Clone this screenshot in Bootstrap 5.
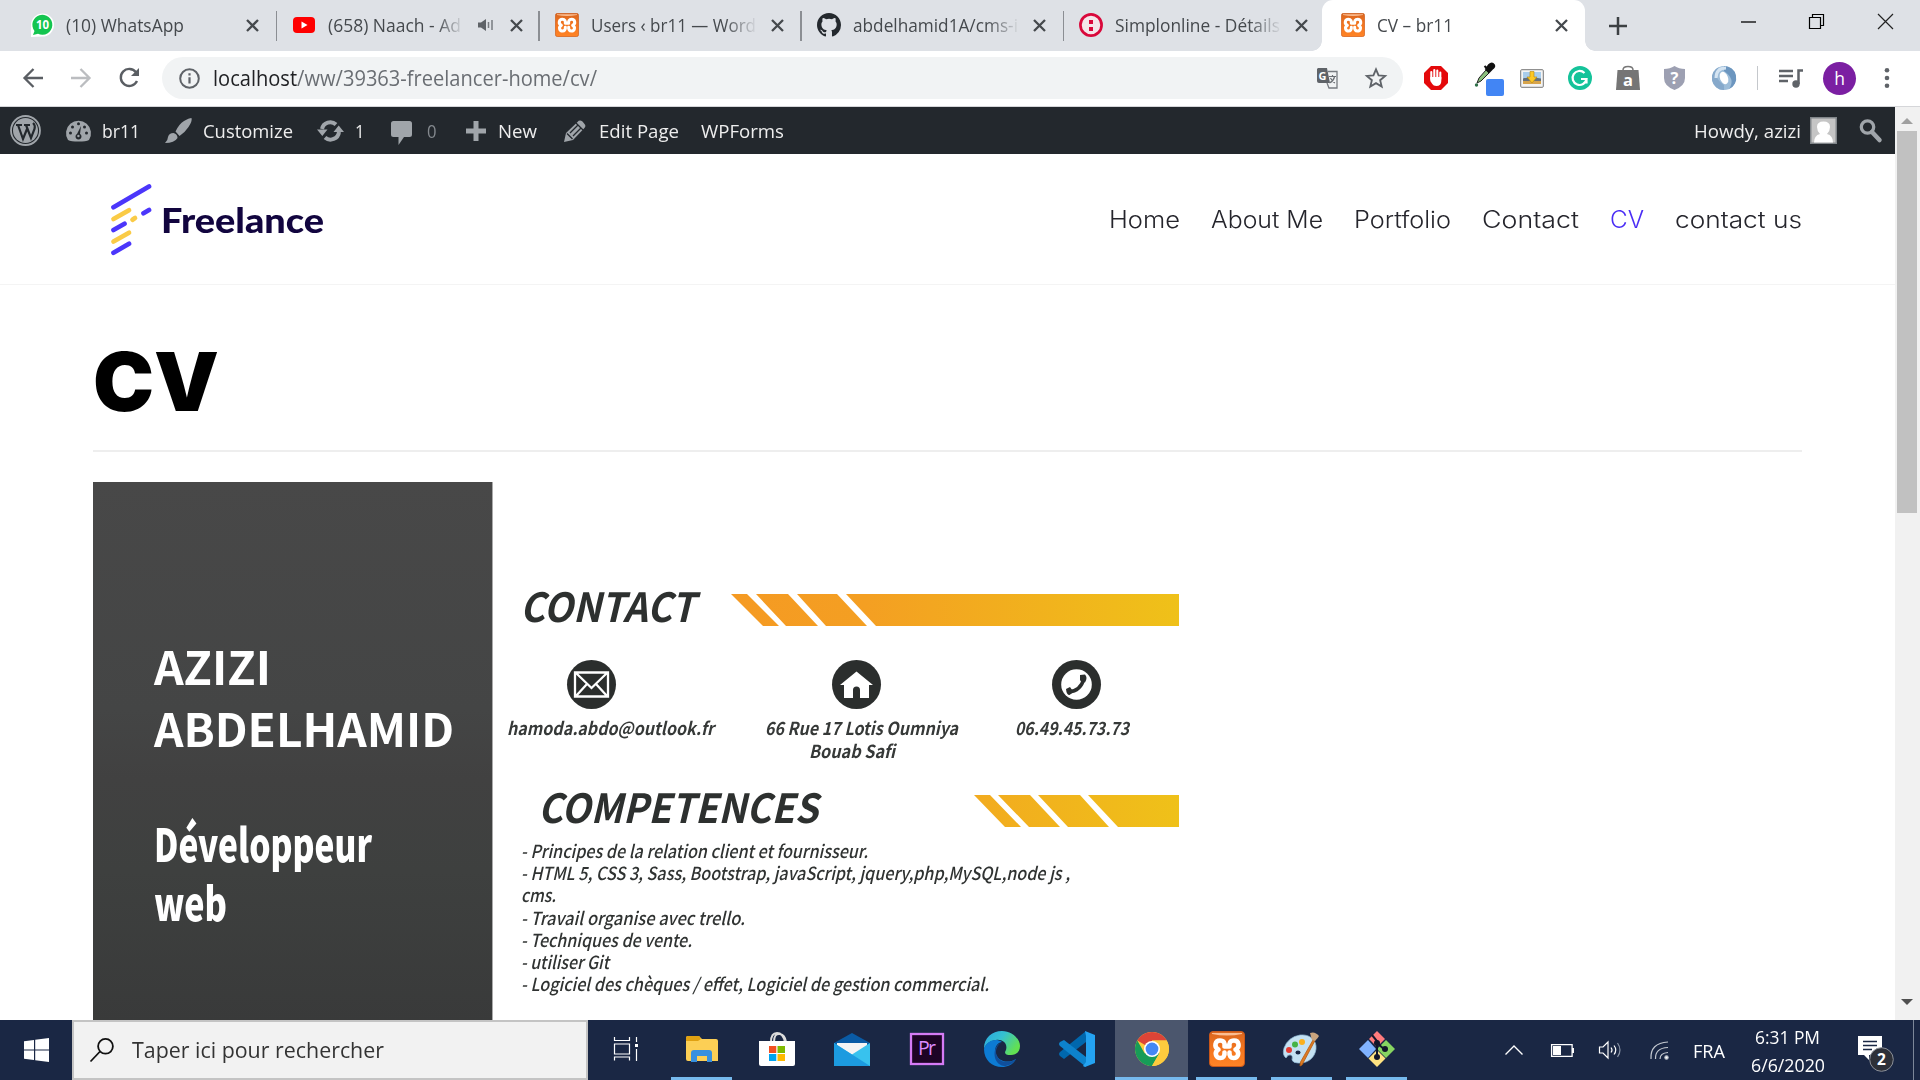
<!DOCTYPE html>
<html lang="fr">
<head>
<meta charset="utf-8">
<title>CV – br11</title>
<link href="https://cdn.jsdelivr.net/npm/bootstrap@5.3.0/dist/css/bootstrap.min.css" rel="stylesheet">
<style>
html,body{height:1080px;overflow:hidden}
body{font-family:"Open Sans","Noto Sans",sans-serif;width:1920px;background:#fff;line-height:1.2}
svg{display:block;flex:none;overflow:visible}
.fit{display:inline-block;white-space:nowrap;transform-origin:0 50%;flex:none}
.g{display:grid;align-items:center;flex:none}
/* browser tabs */
.tabstrip{height:51px;background:#dee1e6;padding-left:14px;flex:none}
.btab{width:262.3px;height:51px;grid-template-columns:24px 12px 1fr 28px 15px;padding-left:16px;padding-bottom:1px;position:relative;font-size:17.5px;color:#45494d}
.btab.muted-tab{grid-template-columns:24px 12px 1fr 40px 0}
.btab .x{margin-left:13px}
.btab.muted-tab .x{margin-left:11px}
.btab .speaker{margin-left:14px}
.btab .clip{width:136px}
.btab.line::after{content:"";position:absolute;right:-1px;top:11px;height:30px;width:1.5px;background:#8b8e93}
.fade-end{overflow:hidden;-webkit-mask-image:linear-gradient(90deg,#000 80%,transparent);mask-image:linear-gradient(90deg,#000 80%,transparent)}
.btab.active{background:#fff;border-radius:11px 11px 0 0;margin-left:-3px;width:263px;padding-left:19px}
.btab.active::before,.btab.active .foot{content:"";position:absolute;bottom:0;width:10px;height:10px}
.btab.active::before{left:-10px;background:radial-gradient(circle at 0 0,transparent 9.5px,#fff 10px)}
.btab.active .foot{right:-10px;background:radial-gradient(circle at 100% 0,transparent 9.5px,#fff 10px)}
.wincontrols{grid-template-columns:132px 68px 69px 27px;margin-left:24px;height:51px}
.wincontrols .up{margin-top:-8px}
/* toolbar */
.tools{height:55.5px;border-bottom:1.5px solid #d5d6d9;grid-template-columns:48px 48px 43px 1241px 21px 48px 48px 48px 48px 48px 48px 45px 22px 44px 51px 20px;padding-left:23px;flex:none}
.omni{height:42px;border-radius:21px;background:#f1f3f4;grid-template-columns:34px 1fr 48px 38px;padding-left:17px;font-size:21px;color:#6a6e73}
.omni b{font-weight:400;color:#202124}
/* admin bar */
.adminbar{height:47.5px;background:#23282d;color:#eee;font-size:18.5px;width:1895px;grid-template-columns:56px 36px 63px 38px 114px 38px 36px 36px 39px 32px 66px 35px 102px 1fr 116px 50px 35px;padding-left:10px;padding-top:1px}
.adminbar svg{fill:#a0a5aa}
/* site */
.sitehead{height:131px;border-bottom:1.5px solid #f4f4f4;padding:1px 93px 0 111px}
.brandname{font-family:Lato,sans-serif;font-weight:900;font-size:34.5px;color:#12053f;margin-left:9px;padding-top:1px}
.menu{font-family:Inter,sans-serif;font-weight:300;font-size:23.5px;color:#25252c;gap:31px;padding-top:1px}
.menu .on{color:#4a2df5}
.bigtitle{font-family:Inter,sans-serif;font-weight:900;font-size:81px;color:#000;line-height:80px;height:80px;margin:57px 0 0}
.sep{height:2px;background:#eee;margin-top:28px;width:1709px}
.cvart{margin-top:30px;font-family:"Noto Sans CJK JP",sans-serif;color:#2d302f}
.side{width:400px;height:540px;background:linear-gradient(#484848 0,#444545 42%,#414141 55%,#3e403f 72%,#393a3a);border-right:1px solid #aaa;padding:152px 0 0 61px;color:#fff;font-weight:700}
.who{font-size:46.5px;line-height:62px}
.job{font-size:46px;line-height:59px;margin-top:55px;font-weight:900}
.resume{padding:99px 0 0 14px;font-style:italic}
.sec{font-weight:700;font-size:40px;line-height:48px;height:48px}
.ways{font-weight:600;font-size:18px;line-height:23px;margin-top:31px;height:102px;color:#363938}
.ways svg{margin-bottom:7px}
.skills{font-size:18px;line-height:22.2px;color:#303332;font-weight:500;margin-top:9px;padding-left:14px}
/* scrollbar */
.sbar{width:25px;background:#f1f1f1;height:913px;padding:11px 0 8px 3px}
.thumb{background:#c1c1c1;width:20px;height:382px;margin:7px 0 486px -1px}
/* taskbar */
.task{height:60px;background:#1a2744;color:#fff;flex:none}
.find{width:516px;height:60px;background:#f2f2f2;border:2px solid #c4c4c4;font-size:21px;color:#333;padding:1px 0 0 16px}
.find .hint{margin-left:18px}
.apps{padding-left:1px}
.app{width:75px;height:60px;display:flex;justify-content:center;align-items:center;padding-bottom:2px;position:relative}
.app.run::after{content:"";position:absolute;bottom:0;left:7px;right:7px;height:3px;background:#76b9ed}
.app.cur{background:linear-gradient(#4b566d,#4b566d) 1px 0/73px 60px no-repeat}
.app.cur::after{left:1px;right:1px}
.tray{grid-template-columns:46px 48px 51px 43px 53px 86px 75px 8px;font-size:18px;margin-left:91px;height:60px}
.clock{line-height:28px;padding-top:1px}
.notes{margin:8px 0 0 26px}
.edge-line{width:1px;height:60px;background:#7c8799;margin-left:6px}
</style>
<script src="https://cdn.jsdelivr.net/npm/bootstrap@5.3.0/dist/js/bootstrap.bundle.min.js"></script>
</head>
<body class="d-flex flex-column">
<svg width="0" height="0" class="position-absolute">
<defs>
<linearGradient id="or" x1="0" y1="0" x2="0" y2="1"><stop offset="0" stop-color="#d9661f"/><stop offset=".5" stop-color="#f4761f"/><stop offset="1" stop-color="#ff8426"/></linearGradient>
<linearGradient id="bar" gradientUnits="userSpaceOnUse" x1="731" y1="0" x2="1179" y2="0"><stop offset="0" stop-color="#f59a23"/><stop offset=".3" stop-color="#f49f22"/><stop offset="1" stop-color="#efc119"/></linearGradient>
<linearGradient id="edge1" x1="0" y1="0" x2="1" y2=".5"><stop offset="0" stop-color="#2ba7e0"/><stop offset=".5" stop-color="#35c1d1"/><stop offset="1" stop-color="#62e052"/></linearGradient>
<symbol id="xampp" viewBox="0 0 36 36"><rect x=".5" y=".5" width="35" height="35" rx="3.5" fill="url(#or)" stroke="#c8571a"/><path d="M3 3Q18 6 33 3V2H3z" fill="#fbbd92"/><path d="M15.500 21.500C16 25 14 27 11.500 27C6.500 27 5 21 9.500 18.500C4.500 16 6 9.500 11 9.500C15 9.500 16 12 15.500 15.500H20.500C20 12 21 9.500 25 9.500C30 9.500 31.500 16 26.500 18.500C31 21 29.500 27 24.500 27C22 27 20 25 20.500 21.500" fill="none" stroke="#fff" stroke-width="4.600" stroke-linecap="round" stroke-linejoin="round"/></symbol>
<symbol id="x" viewBox="0 0 13 13"><path d="M1 1l11 11M12 1L1 12" stroke="#45494d" stroke-width="2.300"/></symbol>
</defs>
</svg>

<header class="tabstrip d-flex">
 <div class="btab line g"><svg width="24" height="24" viewBox="0 0 24 24"><path d="M1 24V12A11.500 11.500 0 1 1 12.500 23.500z" fill="#fff"/><path d="M3 22L4.500 18A10 10 0 1 1 8 20.800z" fill="#14c550"/><text x="12.500" y="16.300" font-size="11.500" font-weight="700" fill="#fff" text-anchor="middle">10</text></svg><i></i><span><span class="fit" data-w="118">(10) WhatsApp</span></span><svg class="x" width="13" height="13"><use href="#x"/></svg></div>
 <div class="btab line muted-tab g"><svg width="24" height="24" viewBox="0 0 24 24"><rect x="1" y="4" width="22" height="16" rx="4" fill="#f00"/><path d="M9.500 8.500v7l6-3.500z" fill="#fff"/></svg><i></i><div class="d-flex align-items-center"><span class="fade-end d-block clip"><span class="fit" data-w="133">(658) Naach - Ad</span></span><svg class="speaker" width="17" height="14" viewBox="0 0 17 14"><path d="M0 4.500h3L8 1v12L3 9.500H0z" fill="#5f6368"/><path d="M10.500 4v6M14 2v10" stroke="#777b80" stroke-width="1.500"/></svg></div><svg class="x" width="13" height="13"><use href="#x"/></svg></div>
 <div class="btab line g"><svg width="24" height="24"><use href="#xampp"/></svg><i></i><span class="fade-end"><span class="fit" data-w="165">Users ‹ br11 — Word</span></span><svg class="x" width="13" height="13"><use href="#x"/></svg></div>
 <div class="btab line g"><svg width="24" height="24" viewBox="0 0 16 16"><path fill="#24292e" d="M8 0C3.580 0 0 3.580 0 8c0 3.540 2.290 6.530 5.470 7.590.4.070.55-.17.55-.38 0-.19-.01-.82-.01-1.490-2.010.37-2.530-.49-2.690-.94-.09-.23-.48-.94-.82-1.130-.28-.15-.68-.52-.01-.53.63-.01 1.080.58 1.230.82.72 1.210 1.870.87 2.330.66.07-.52.28-.87.51-1.070-1.780-.2-3.640-.89-3.640-3.950 0-.87.31-1.590.82-2.150-.08-.2-.36-1.020.08-2.120 0 0 .67-.21 2.200.82a7.600 7.600 0 0 1 4 0c1.530-1.040 2.200-.82 2.200-.82.44 1.100.16 1.920.08 2.120.51.56.82 1.270.82 2.150 0 3.070-1.870 3.750-3.650 3.950.29.25.54.73.54 1.480 0 1.070-.01 1.930-.01 2.200 0 .21.15.46.55.38A8.010 8.010 0 0 0 16 8c0-4.420-3.580-8-8-8z"/></svg><i></i><span class="fade-end"><span class="fit" data-w="165">abdelhamid1A/cms-i</span></span><svg class="x" width="13" height="13"><use href="#x"/></svg></div>
 <div class="btab g"><svg width="24" height="24" viewBox="0 0 24 24"><circle cx="12" cy="12" r="10.600" fill="#f4e6ea" stroke="#d9083b" stroke-width="2.700"/><path d="M10 7h4v4h-4zM10 14h4v4h-4z" fill="#d9083b"/></svg><i></i><span class="fade-end"><span class="fit" data-w="165">Simplonline - Détails</span></span><svg class="x" width="13" height="13"><use href="#x"/></svg></div>
 <div class="btab active g"><svg width="24" height="24"><use href="#xampp"/></svg><i></i><span><span class="fit" data-w="76">CV – br11</span></span><svg class="x" width="13" height="13"><use href="#x"/></svg><i class="foot"></i></div>
 <div class="wincontrols g"><svg width="18" height="18" viewBox="0 0 18 18"><path d="M9 0v18M0 9h18" stroke="#3c4043" stroke-width="2.500"/></svg><svg class="up" width="15" height="2" viewBox="0 0 15 2"><path d="M0 1h15" stroke="#000" stroke-width="1.300"/></svg><svg class="up" width="15" height="15" viewBox="0 0 15 15"><path d="M.5 3.500h11v11H.5zM3.500 3V.5h11v11H12" fill="none" stroke="#000" stroke-width="1.200"/></svg><svg class="up" width="15" height="15" viewBox="0 0 15 15"><path d="M0 0l15 15M15 0L0 15" stroke="#222" stroke-width="1.200"/></svg></div>
</header>

<div class="tools g">
 <svg width="20" height="20" viewBox="0 0 20 20" fill="none" stroke="#5a5e63" stroke-width="2.300"><path d="M20 10H2M10.500 1L1.500 10l9 9"/></svg>
 <svg width="20" height="20" viewBox="0 0 20 20" fill="none" stroke="#bbbdc0" stroke-width="2.300"><path d="M0 10h18M9.500 1l9 9-9 9"/></svg>
 <svg width="21" height="20" viewBox="0 0 21 20"><path d="M17 4.200A8.500 8.500 0 1 0 18 13" fill="none" stroke="#5a5e63" stroke-width="2.400"/><path d="M20 0v8h-8z" fill="#5a5e63"/></svg>
 <div class="omni g"><svg width="21" height="21" viewBox="0 0 21 21"><circle cx="10.500" cy="10.500" r="9.300" fill="none" stroke="#5f6368" stroke-width="2"/><path d="M10.500 9.300v6.200M10.500 5.300v2.300" stroke="#5f6368" stroke-width="2.200"/></svg><span><span class="fit" data-w="384"><b>localhost</b>/ww/39363-freelancer-home/cv/</span></span>
 <svg width="21" height="22" viewBox="0 0 21 22"><path d="M1 1h9l3 15H2Q0 16 0 14V2z" fill="#5f6368"/><path d="M11 4.500h9V21h-8l-2-5" fill="none" stroke="#777b80" stroke-width="1.300"/><text x="1.500" y="12.500" font-size="11" font-weight="700" fill="#fff">G</text><path d="M12 9.500h7M15.500 8v2M17.500 10q-1 4-5 6M13.500 11q2 4 4.500 5" fill="none" stroke="#6b6f74" stroke-width="1.200"/></svg>
 <svg width="22" height="22" viewBox="0 0 24 24"><path d="M12 2.500l2.800 6.600 7.200.6-5.500 4.700 1.700 7L12 17.600l-6.200 3.800 1.700-7L2 9.700l7.200-.6z" fill="none" stroke="#5f6368" stroke-width="2"/></svg></div>
 <i></i>
 <svg width="24" height="24" viewBox="0 0 24 24"><path d="M7 0h10l7 7v10l-7 7H7l-7-7V7z" fill="#e4090b"/><path d="M7.300 13V6M10.300 12V4M13.300 12V4.500M16.300 13V6.500" stroke="#fff" stroke-width="2.100" stroke-linecap="round"/><path d="M6.300 11h11v4q0 5-5 5-3 0-4-2L6.300 15z" fill="#fff"/></svg>
 <svg width="32" height="34" viewBox="0 0 32 34"><path d="M5 22l2-5 7-8 3 3-8 8z" fill="#8bbf7d" stroke="#222"/><path d="M12.500 5l6 6M14 8l3-4q3-3 5 0 1 2-2 4l-3 3z" stroke="#111" stroke-width="2" fill="#111"/><circle cx="4.500" cy="24" r="1.700" fill="#30704a"/><rect x="14" y="18" width="18" height="17" rx="2" fill="#4285f4"/></svg>
 <svg width="24" height="19" viewBox="0 0 24 19"><rect x=".7" y=".7" width="22.600" height="17.600" rx="1" fill="#f4f4f4" stroke="#777"/><path d="M3 3h18v7H3z" fill="#a9cdec"/><path d="M3 9.500q7-2 18 0V15H3z" fill="#66707a"/><path d="M3 12h18v3H3z" fill="#d7a44b"/><path d="M10 2.500h4V8h3l-5 6-5-6h3z" fill="#fdc824" stroke="#b98709" stroke-width=".6"/></svg>
 <svg width="24" height="24" viewBox="0 0 24 24"><circle cx="12" cy="12" r="12" fill="#15c39a"/><path d="M16.500 7A7 7 0 1 0 18.500 13h-5.500M18.500 13v4.500" fill="none" stroke="#fff" stroke-width="2.200"/></svg>
 <svg width="24" height="24" viewBox="0 0 24 24"><path d="M1.500 4h21L24 24H0z" fill="#757575"/><path d="M7 7V4q0-3.500 5-3.500T17 4v3" fill="none" stroke="#777" stroke-width="1.500"/><text x="12" y="20" font-size="16.500" font-weight="700" fill="#fff" text-anchor="middle">a</text></svg>
 <svg width="21" height="24" viewBox="0 0 21 24"><path d="M10.500 0Q15 3 21 3v9q0 8-10.500 12Q0 20 0 12V3Q6 3 10.500 0z" fill="#9da0b2"/><text x="10.500" y="18" font-size="16.500" font-weight="700" fill="#fff" text-anchor="middle">?</text></svg>
 <svg width="24" height="24" viewBox="0 0 24 24"><circle cx="12" cy="12" r="12" fill="#9dbdd9"/><path d="M12 0A12 12 0 0 1 17 23Q24 13 12 5z" fill="#6c96bf"/><path d="M12 24A12 12 0 0 1 7 1Q0 11 12 19z" fill="#86a9cb"/><path d="M4 12Q4 2 14 2" fill="none" stroke="#d4e4f2" stroke-width="3"/><ellipse cx="12" cy="12" rx="4" ry="6.500" transform="rotate(-20 12 12)" fill="#fff"/></svg>
 <span style="width:1px;height:24px;background:#c5c8cc"></span>
 <svg width="24" height="20" viewBox="0 0 24 20"><path d="M0 3h14M0 8h14M0 13h9" stroke="#5f6368" stroke-width="2.500"/><path d="M19.500 16V2.500H24" fill="none" stroke="#5f6368" stroke-width="2.500"/><circle cx="17" cy="16" r="3.700" fill="#5f6368"/></svg>
 <svg width="33" height="33" viewBox="0 0 33 33"><circle cx="16.500" cy="16.500" r="16.500" fill="#7b1fa2"/><text x="16.500" y="22.500" font-size="17.500" fill="#fff" text-anchor="middle">h</text></svg>
 <svg width="20" height="20" viewBox="0 0 20 20" fill="#5f6368"><circle cx="13" cy="2.300" r="2.300"/><circle cx="13" cy="10" r="2.300"/><circle cx="13" cy="17.700" r="2.300"/></svg>
</div>

<div class="d-flex flex-grow-1">
<main style="width:1895px;height:913.5px;overflow:hidden">
 <nav class="adminbar g">
  <svg width="31" height="31" viewBox="0 0 31 31"><circle cx="15.500" cy="15.500" r="14.500" fill="none" stroke="#a0a5aa" stroke-width="1.800"/><circle cx="15.500" cy="15.500" r="12.500"/><path d="M6 10h6M14 10h6M8 10l5 14 4-10M16 10l5 13 3.500-9q1-4-1.500-6" fill="none" stroke="#23282d" stroke-width="2.200"/></svg>
  <svg width="25" height="24" viewBox="0 0 25 24"><path d="M2 21A12.500 12.500 0 1 1 23 21q-3 1.500-10.500 1.500T2 21z"/><g fill="#23282d"><circle cx="4.500" cy="14" r="1.500"/><circle cx="6.500" cy="8" r="1.500"/><circle cx="12.500" cy="4.800" r="1.500"/><circle cx="18.500" cy="8" r="1.500"/><circle cx="20.500" cy="14" r="1.500"/><path d="M15 7l-1 8a3 3 0 1 1-3 0z"/></g><circle cx="12.400" cy="17" r="1.200"/></svg>
  <span><span class="fit" data-w="38">br11</span></span>
  <svg width="27" height="25" viewBox="0 0 27 25"><path d="M26.500 0q1 3-3 9-4 6-9 9l-4-4.500Q14 6 19 3q5-3 7.500-3zM8.500 15q4 1 4 5-3 5-12.500 5 3-3 3-6 1-4 5.500-4z"/></svg>
  <span><span class="fit" data-w="90">Customize</span></span>
  <svg width="27" height="22" viewBox="0 0 27 22"><g fill="none" stroke="#a0a5aa" stroke-width="4"><path d="M5 9A8.500 8.500 0 0 1 19 4.500M22 12A8.500 8.500 0 0 1 8 17.500"/></g><path d="M0 9.500h10.500L5.300 16zM16.500 12h10.500l-5.300-6.500z"/></svg>
  <span><span class="fit" data-w="9.500">1</span></span>
  <svg width="21" height="24" viewBox="0 0 21 24" class="mt-1"><path d="M2.500 0h16Q21 0 21 2.500v11q0 2.500-2.500 2.500H13l-5.500 8v-8h-5Q0 16 0 13.500v-11Q0 0 2.500 0z"/></svg>
  <span style="color:#84898e"><span class="fit" data-w="9.500">0</span></span>
  <svg width="20" height="20" viewBox="0 0 20 20"><path d="M7.500 0h5v7.500H20v5h-7.500V20h-5v-7.500H0v-5h7.500z"/></svg>
  <span><span class="fit" data-w="39">New</span></span>
  <svg width="22" height="22" viewBox="0 0 22 22"><path d="M0 22l2-9L13.500 2q2-2.500 5-.5l2 2.500q2 2-.5 4.500L9 20z"/><path d="M3 13.500l5.500 5.500M6 13L14 5M9 16l8-8M12 3l7 7" stroke="#23282d" stroke-width="1.300"/></svg>
  <span><span class="fit" data-w="80">Edit Page</span></span>
  <span><span class="fit" data-w="83">WPForms</span></span>
  <span><span class="fit" data-w="107">Howdy, azizi</span></span>
  <svg width="27" height="27" viewBox="0 0 27 27"><path d="M0 0h27v27H0z" fill="#81868a"/><path d="M1.500 1.500h24v24h-24z" fill="#c5c5c5"/><path d="M4 25.500q0-7 6-8.500-3-3-3-7 0-5.500 6.500-5.500T20 10q0 4-3 7 6 1.500 6 8.500z" fill="#fff"/></svg>
  <svg width="23" height="23" viewBox="0 0 23 23"><circle cx="7.500" cy="8" r="6.200" style="fill:none" stroke="#a0a5aa" stroke-width="3.300"/><path d="M12 13l7.500 8" stroke="#a0a5aa" stroke-width="4.500" stroke-linecap="round"/></svg>
 </nav>
 <div class="sitehead d-flex align-items-center">
  <svg width="41" height="72" viewBox="0 0 41 72" fill="none" stroke-width="4.700" stroke-linecap="round"><path d="M2.500 23.200L38 2.500M2.500 46L13.500 39.700M32.500 29.200L38 26M2.500 68.800L18 59.800" stroke="#4b36fb"/><path d="M2.500 35L18 26.200M21.500 35.700L24 34M2.500 57.500L18 48.700" stroke="#facb46"/></svg>
  <span class="brandname"><span class="fit" data-w="163">Freelance</span></span>
  <div class="menu d-flex ms-auto"><span class="fit" data-w="71">Home</span><span class="fit" data-w="112">About Me</span><span class="fit" data-w="97">Portfolio</span><span class="fit" data-w="97">Contact</span><span class="fit on" data-w="34">CV</span><span class="fit" data-w="127">contact us</span></div>
 </div>
 <article style="margin-left:93px">
  <h1 class="bigtitle"><span class="fit" data-w="126">CV</span></h1>
  <div class="sep"></div>
  <div class="cvart d-flex">
   <div class="side"><div class="who"><span class="fit" data-w="117">AZIZI</span><br><span class="fit" data-w="300">ABDELHAMID</span></div>
    <div class="job"><span class="fit" data-w="218">Développeur</span><br><span class="fit" data-w="73">web</span></div></div>
   <div class="resume">
    <div class="sec d-flex" style="padding-left:13px"><span class="fit" data-w="175">CONTACT</span>
     <svg width="448" height="32" viewBox="731 0 448 32" style="margin:13px 0 0 36px" fill="url(#bar)"><path d="M731 0h16l32 32h-16zM756 0h32l30 32h-32zM797 0h40l30 32h-41zM846 0h333v32H876z"/></svg></div>
    <div class="ways d-flex" style="gap:0 54px">
     <div style="width:204px"><svg style="margin-left:60px" width="49" height="49" viewBox="0 0 49 49"><circle cx="24.500" cy="24.500" r="24.500" fill="#2b2e2d"/><path d="M8 12.500h33v24H8zM9 13l15.500 15L40 13M9 36l11-12M40 36L29 24" fill="none" stroke="#fff" stroke-width="2.300"/></svg><span class="fit" data-w="207">hamoda.abdo@outlook.fr</span></div>
     <div style="width:196px"><svg style="margin-left:67px" width="49" height="49" viewBox="0 0 49 49"><circle cx="24.500" cy="24.500" r="24.500" fill="#2b2e2d"/><path d="M24.500 11.500L41 25h-4v13h-9v-8q0-3.500-3.500-3.500T21 30v8h-9V25H8z" fill="#fff"/></svg><span class="fit" data-w="193">66 Rue 17 Lotis Oumniya</span><br><span class="fit" style="margin-left:44px" data-w="86">Bouab Safi</span></div>
     <div><svg style="margin-left:37px" width="49" height="49" viewBox="0 0 49 49"><circle cx="24.500" cy="24.500" r="24.500" fill="#2b2e2d"/><circle cx="24.500" cy="24.500" r="15.300" fill="#fff"/><path d="M16.500 32Q29 31 32 18" fill="none" stroke="#2b2e2d" stroke-width="3.500"/><path d="M14 29l4-2 3.500 5-4 3q-3 0-3.500-6zM28 15l5-.5q3 3 0 8l-5-2z" fill="#2b2e2d"/></svg><span class="fit" data-w="114">06.49.45.73.73</span></div>
    </div>
    <div class="sec d-flex" style="padding-left:31px;margin-top:20px"><span class="fit" data-w="280">COMPETENCES</span>
     <svg width="205" height="32" viewBox="974 0 205 32" style="margin:13px 0 0 156px" fill="url(#bar)"><path d="M974 0h16l31 32h-16zM998 0h32l30 32h-31zM1038 0h42l29 32h-41zM1088 0h91v32h-61z"/></svg></div>
    <div class="skills"><span class="fit" data-w="347">- Principes de la relation client et fournisseur.</span><br><span class="fit" data-w="549">- HTML 5, CSS 3, Sass, Bootstrap, javaScript, jquery,php,MySQL,node js ,</span><br><span class="fit" data-w="35">cms.</span><br><span class="fit" data-w="224">- Travail organise avec trello.</span><br><span class="fit" data-w="171">- Techniques de vente.</span><br><span class="fit" data-w="88">- utiliser Git</span><br><span class="fit" data-w="468">- Logiciel des chèques / effet, Logiciel de gestion commercial.</span></div>
   </div>
  </div>
 </article>
</main>
<aside class="sbar"><svg width="18" height="6" viewBox="0 0 12 6" fill="#a0a0a0"><path d="M0 6l6-6 6 6z"/></svg><div class="thumb"></div><svg width="18" height="6" viewBox="0 0 12 6" fill="#505050"><path d="M0 0l6 6 6-6z"/></svg></aside>
</div>

<footer class="task d-flex">
 <div class="d-flex align-items-center justify-content-center" style="width:72px"><svg width="25" height="24" viewBox="0 0 25 24" fill="#fff"><path d="M0 3.300L10 2v9.400H0zM11.200 1.800L25 0v11.400H11.200zM0 12.600h10V22L0 20.700zM11.200 12.600H25V24l-13.800-1.800z"/></svg></div>
 <div class="find d-flex align-items-center"><svg width="24" height="24" viewBox="0 0 24 24" fill="none" stroke="#111" stroke-width="1.800"><circle cx="15.500" cy="7.300" r="7.400"/><path d="M10 12.500L.5 22.500"/></svg><span class="fit hint" data-w="252">Taper ici pour rechercher</span></div>
 <div class="apps d-flex">
 <div class="app"><svg width="25" height="24" viewBox="0 0 25 24" fill="none" stroke="#fff" stroke-width="1.200"><path d="M.5 0v3.500h15V0M.5 7h15v10H.5zM.5 23.500V20h15v3.500M22.500 0v5M22.500 12v12"/><path d="M21 7h3v3h-3z" fill="#fff" stroke="none"/></svg></div>
 <div class="app run"><svg width="32" height="27" viewBox="0 0 32 27"><path d="M0 2q0-2 2-2h11l3 3H30q2 0 2 2v20H2q-2 0-2-2z" fill="#fccf55"/><path d="M0 2q0-2 2-2h11l2 3-3 2H0z" fill="#e0a112"/><path d="M5 26V17q0-3 3-3h15q3 0 3 3v9h-5v-6H11v6z" fill="#3790df"/></svg></div>
 <div class="app"><svg width="36" height="34" viewBox="0 0 36 34"><path d="M12 10q0-9 6-9t8 9M15 10q0-9 6-8 5 1 6 8" fill="none" stroke="#ddd" stroke-width="2"/><path d="M0 9h36v23q0 2-2 2H2q-2 0-2-2z" fill="#fff"/><path d="M10 14h7.300v7H10z" fill="#f25022"/><path d="M18.500 14H26v7h-7.500z" fill="#7fba00"/><path d="M10 22h7.300v7H10z" fill="#00a4ef"/><path d="M18.500 22H26v7h-7.500z" fill="#ffb900"/></svg></div>
 <div class="app"><svg width="36" height="33" viewBox="0 0 36 33"><path d="M0 10L18 0l18 10v10H0z" fill="#0a5ba5"/><path d="M3 10h30v12H3z" fill="#f4f4f4"/><path d="M0 10l18 11.500L36 10v23H0z" fill="#38c2ee"/><path d="M0 10l36 23H0z" fill="#1c9be0"/></svg></div>
 <div class="app"><svg width="34" height="32" viewBox="0 0 34 32"><rect x="1" y="1" width="32" height="30" fill="#1d0425" stroke="#d57bf5" stroke-width="2.300"/><text x="8" y="22" font-size="19.500" fill="#dc8cff" textLength="18">Pr</text></svg></div>
 <div class="app"><svg width="36" height="36" viewBox="0 0 36 36"><path d="M0 17C0 7 8 0 18 0s18 8 18 15c0 6-4 9-9 9-6 0-7-2-5-5C24 12 18 8 12 9 5 10 0 14 0 20z" fill="url(#edge1)"/><path d="M0 18C3 9 12 7 18 11c-6 1-8 7-6 12 3 9 14 9 20 5-3 6-9 8-14 8C8 36 0 29 0 18z" fill="#0d7bd3"/><path d="M17 12c-5 3-6 9-4 13 4 8 13 7 19 3-3 5-8 7-12 7C8 33 8 15 17 12z" fill="#104f9c"/></svg></div>
 <div class="app"><svg width="36" height="36" viewBox="0 0 36 36"><path d="M27 0v11L5 28l-4-3q-2-2 0-4z" fill="#0067ad"/><path d="M5 9l22 17v10L1 15q-2-2 0-4z" fill="#0d82cc"/><path d="M26 0l10 4v28l-10 4-2-1 3-4V5z" fill="#24a3f2"/></svg></div>
 <div class="app run cur"><svg width="34" height="34" viewBox="0 0 34 34"><circle cx="17" cy="17" r="17" fill="#fecb3e"/><path d="M17 17L2.300 8.500A17 17 0 0 1 31.700 8.500H17z" fill="#dc4437"/><path d="M2.300 8.500A17 17 0 0 0 17 34l7.400-12.700H9.600z" fill="#179c58"/><path d="M24.400 21.300L17 34A17 17 0 0 0 31.700 8.500H17z" fill="#fecb3e"/><circle cx="17" cy="17" r="8" fill="#fff"/><circle cx="17" cy="17" r="6.400" fill="#4487f4"/></svg></div>
 <div class="app run"><svg width="36" height="36"><use href="#xampp"/></svg></div>
 <div class="app run"><svg width="37" height="36" viewBox="0 0 37 36"><path d="M17 4C27 3 34 9 33 18S24 33 15 32q-5 0-6-3 1-4-1-5-3-1-5 3Q-1 24 1 17 5 6 17 4z" fill="#c4e1f2" stroke="#8fb9d5" stroke-width=".7"/><circle cx="6" cy="19" r="3" fill="#e43b32"/><circle cx="12" cy="13.500" r="3" fill="#46b347"/><circle cx="19" cy="11" r="3" fill="#fbb01c"/><ellipse cx="15" cy="21.500" rx="2.500" ry="2" fill="#1a2744"/><path d="M30 9l2 .5L19 34l-2 1 .5-4z" fill="#dd7b22" stroke="#b65c12" stroke-width=".8"/><path d="M27 2q5-2 9 3-1 2-4 5l-3-1z" fill="#c9a47e"/></svg></div>
 <div class="app run"><svg width="36" height="36" viewBox="0 0 36 36"><path d="M18 0l8 8-8 8-8-8z" fill="#ff7b7d"/><path d="M9 9l8 9-8 9-9-9z" fill="#80b3ff"/><path d="M27 9l9 9-9 9-9-9z" fill="#87d561"/><path d="M18 19l8.500 8.500L18 36l-8.500-8.500z" fill="#ffe482"/><path d="M13 4l5 6v16M18 12l8 7" fill="none" stroke="#12162a" stroke-width="2"/><circle cx="18" cy="12" r="3" fill="#12162a"/><circle cx="26" cy="18" r="3" fill="#12162a"/><circle cx="18" cy="26" r="3" fill="#12162a"/></svg></div>
 </div>
 <div class="tray g"><svg width="18" height="10" viewBox="0 0 18 10"><path d="M.5 9.500l8.500-8.500 8.500 8.500" fill="none" stroke="#fff" stroke-width="1.400"/></svg>
 <svg width="23" height="13" viewBox="0 0 23 13"><path d="M.6.6h20.500v11.800H.6z" fill="none" stroke="#fff" stroke-width="1.300"/><path d="M2 2h8v9H2zM21 4h2v5h-2z" fill="#fff"/></svg>
 <svg width="22" height="18" viewBox="0 0 22 18" fill="none" stroke="#fff" stroke-width="1.200"><path d="M.5 6H4l5-5v16l-5-5H.5zM12 6.500q2 2.500 0 5M15 4.500q3.500 4.500 0 9"/><path d="M18.500 2q5 7 0 14" stroke="#8993a5"/></svg>
 <svg width="19" height="19" viewBox="0 0 19 19" fill="none" stroke="#c3c8d0" stroke-width="1.200"><path d="M1 18Q0 2 18 1M5.500 18Q5 7 18 6.500M10 18Q10 12 18 11.500"/><circle cx="16.500" cy="16.500" r="1.600" fill="#fff"/></svg>
 <span class="pt-1"><span class="fit" data-w="32">FRA</span></span>
 <div class="clock"><span class="fit" style="margin-left:9px" data-w="65">6:31 PM</span><br><span class="fit" style="margin-left:5px" data-w="74">6/6/2020</span></div>
 <svg class="notes" width="36" height="36" viewBox="0 0 36 36"><path d="M0 0h24v19H11v5l-5-5H0z" fill="#fff"/><path d="M5 5.500h14M5 9.500h14M5 13.500h9" stroke="#1a2744" stroke-width="1.300"/><circle cx="23.500" cy="23.500" r="11.800" fill="#2d3038" stroke="#8b8f98" stroke-width="1"/><text x="23.500" y="29" font-size="15.500" font-weight="700" fill="#fff" text-anchor="middle">2</text></svg><i class="edge-line"></i></div>
</footer>
<script>
/* Condense or widen each label so that it takes its declared width. */
document.querySelectorAll('.fit').forEach(function(el){
  var w=+el.dataset.w,n=el.getBoundingClientRect().width;
  el.style.transform='scaleX('+(w/n)+')';
  el.style.marginRight=(w-n)+'px';
});
</script>
</body>
</html>
